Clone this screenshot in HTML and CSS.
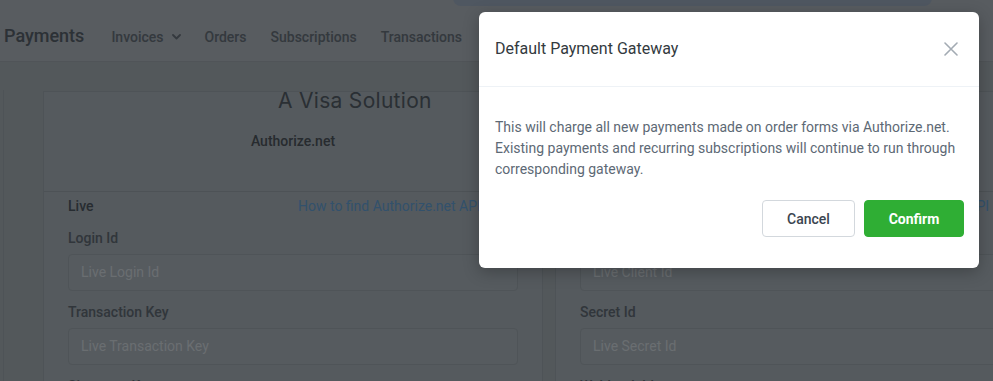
FILE: index.html
```html
<!DOCTYPE html>
<html lang="en">
<head>
<meta charset="utf-8">
<title>Payments</title>
<link rel="stylesheet" href="styles.css">
</head>
<body>
<div class="page">
  <div class="banner"><span class="banner-text">Upgrade your plan to access payment gateway settings (change anytime) — learn more</span></div>
  <header class="topnav">
    <div class="brand">Payments</div>
    <nav class="menu">
      <span class="menu-item">Invoices
        <svg class="chev" width="9" height="6" viewBox="0 0 9 6"><path d="M1 1l3.5 3.5L8 1" fill="none" stroke="currentColor" stroke-width="1.8" stroke-linecap="round" stroke-linejoin="round"/></svg>
      </span>
      <span class="menu-item">Orders</span>
      <span class="menu-item">Subscriptions</span>
      <span class="menu-item">Transactions</span>
      <span class="menu-item">Settings</span>
    </nav>
  </header>
  <main class="content">
    <div class="panel">
      <section class="card">
        <div class="card-head">
          <div class="logo">A Visa Solution</div>
          <div class="gateway-name">Authorize.net</div>
        </div>
        <div class="card-body">
          <div class="row-head">
            <span class="mode">Live</span>
            <a class="help">How to find Authorize.net API Keys</a>
          </div>
          <div class="field">
            <label>Login Id</label>
            <div class="input">Live Login Id</div>
          </div>
          <div class="field">
            <label>Transaction Key</label>
            <div class="input">Live Transaction Key</div>
          </div>
          <div class="field">
            <label>Signature Key</label>
            <div class="input">Live Signature Key</div>
          </div>
        </div>
      </section>
      <section class="card">
        <div class="card-head">
          <div class="gateway-name">PayPal</div>
        </div>
        <div class="card-body">
          <div class="row-head">
            <span class="mode">Live</span>
            <a class="help">How to find PayPal REST API Keys</a>
          </div>
          <div class="field">
            <label>Client Id</label>
            <div class="input">Live Client Id</div>
          </div>
          <div class="field">
            <label>Secret Id</label>
            <div class="input">Live Secret Id</div>
          </div>
          <div class="field">
            <label>Webhook Id</label>
            <div class="input">Live Webhook Id</div>
          </div>
        </div>
      </section>
    </div>
  </main>
</div>

<div class="backdrop"></div>
<div class="modal" role="dialog">
  <div class="modal-head">
    <h2 class="modal-title">Default Payment Gateway</h2>
    <button class="close" aria-label="Close">
      <svg width="14" height="14" viewBox="0 0 14 14"><path d="M1 1l12 12M13 1L1 13" stroke="currentColor" stroke-width="1.6" stroke-linecap="round"/></svg>
    </button>
  </div>
  <div class="modal-body">
    <p class="modal-text">This will charge all new payments made on order forms via Authorize.net. Existing payments and recurring subscriptions will continue to run through corresponding gateway.</p>
    <div class="actions">
      <button class="btn btn-cancel">Cancel</button>
      <button class="btn btn-confirm">Confirm</button>
    </div>
  </div>
</div>
</body>
</html>
```

FILE: styles.css
```css
* { box-sizing: border-box; }
html, body { margin: 0; padding: 0; }
body {
  width: 993px;
  height: 381px;
  overflow: hidden;
  font-family: Roboto, "Liberation Sans", Arial, sans-serif;
  background: rgb(166,176,182);
  position: relative;
}
.page { position: relative; width: 993px; height: 381px; overflow: hidden; }

.banner {
  position: absolute;
  left: 453px;
  top: -26px;
  width: 479px;
  height: 32px;
  background: rgb(158,174,194);
  border-radius: 0 0 8px 8px;
  z-index: 2;
  padding: 2px 20px;
  font-size: 14px;
  line-height: 20px;
  color: rgb(40,80,140);
  white-space: nowrap;
  overflow: hidden;
}

.topnav {
  height: 62px;
  background: rgb(176,184,192);
  border-bottom: 1px solid rgb(160,168,176);
  display: flex;
  align-items: center;
  padding: 12px 0 0 4px;
  gap: 27px;
}
.brand {
  font-size: 18px;
  font-weight: 500;
  color: rgb(88,98,108);
  margin-top: -2px;
}
.menu { display: flex; align-items: center; gap: 24px; }
.menu-item {
  font-size: 14px;
  font-weight: 500;
  color: rgb(104,114,124);
  display: flex;
  align-items: center;
  gap: 8px;
  white-space: nowrap;
}
.chev { display: block; }

.content {
  padding: 28px 0 0 3px;
}
.panel {
  border-left: 1px solid rgb(156,166,174);
  padding-left: 39px;
  display: flex;
  gap: 12px;
  height: 400px;
}
.card {
  flex: 0 0 500px;
  border: 1px solid rgb(156,166,174);
  border-bottom: none;
  background: rgb(170,180,188);
  margin-top: 1px;
}
.card-head {
  height: 100px;
  border-bottom: 1px solid rgb(154,164,172);
  position: relative;
  overflow: hidden;
}
.logo {
  position: absolute;
  left: 234px;
  top: -4px;
  font-family: Inter, "Noto Sans", sans-serif;
  font-size: 21px;
  letter-spacing: 0.3px;
  color: rgb(84,94,104);
  white-space: nowrap;
}
.gateway-name {
  text-align: center;
  font-size: 14px;
  font-weight: 500;
  color: rgb(78,86,94);
  padding-top: 39px;
  line-height: 20px;
}
.card-body { padding: 4px 24px 0 24px; }
.row-head {
  display: grid;
  grid-template-columns: 230px 1fr;
  align-items: center;
  height: 20px;
  font-size: 14px;
  line-height: 20px;
  margin-bottom: 12px;
}
.mode { font-weight: 500; color: rgb(78,88,98); }
.help { color: rgb(100,162,216); white-space: nowrap; }
.field { margin-bottom: 11px; }
.field label {
  display: block;
  font-size: 14px;
  line-height: 20px;
  font-weight: 500;
  color: rgb(98,108,118);
  margin-bottom: 6px;
}
.input {
  height: 37px;
  border: 1px solid rgb(158,168,176);
  border-radius: 4px;
  background: rgb(172,182,190);
  font-size: 14px;
  line-height: 35px;
  padding: 0 12px;
  color: rgb(212,220,226);
}

.backdrop {
  position: absolute;
  inset: 0;
  background: rgba(0,0,0,0.5);
  z-index: 10;
}
.modal {
  position: absolute;
  left: 479px;
  top: 12px;
  width: 500px;
  height: 256px;
  background: #fff;
  border-radius: 6px;
  box-shadow: 0 4px 16px rgba(0,0,0,0.25);
  z-index: 11;
}
.modal-head {
  height: 75px;
  border-bottom: 1px solid #eef2f6;
  display: flex;
  align-items: center;
  justify-content: space-between;
  padding: 0 21px 0 16px;
}
.modal-title {
  margin: 0;
  font-size: 16px;
  font-weight: 400;
  color: #333a40;
  margin-top: -1px;
}
.close {
  border: 0;
  background: none;
  padding: 0;
  width: 14px;
  height: 14px;
  color: #a3abb3;
  display: block;
  margin-top: -1px;
}
.close svg { display: block; }
.modal-body { padding: 30px 15px 0 16px; }
.modal-text {
  margin: 0;
  font-size: 14px;
  line-height: 21px;
  color: #5d6975;
}
.actions {
  display: flex;
  justify-content: flex-end;
  gap: 9px;
  margin-top: 20px;
}
.btn {
  height: 37px;
  border-radius: 4px;
  font-family: Roboto, "Liberation Sans", Arial, sans-serif;
  font-size: 14px;
  padding: 0;
  cursor: pointer;
}
.btn-cancel {
  width: 93px;
  background: #fff;
  border: 1px solid #d3d8dd;
  color: #3b4550;
  font-weight: 500;
}
.btn-confirm {
  width: 100px;
  background: #2fae34;
  border: 1px solid #2fae34;
  color: #fff;
  font-weight: 700;
}
```
